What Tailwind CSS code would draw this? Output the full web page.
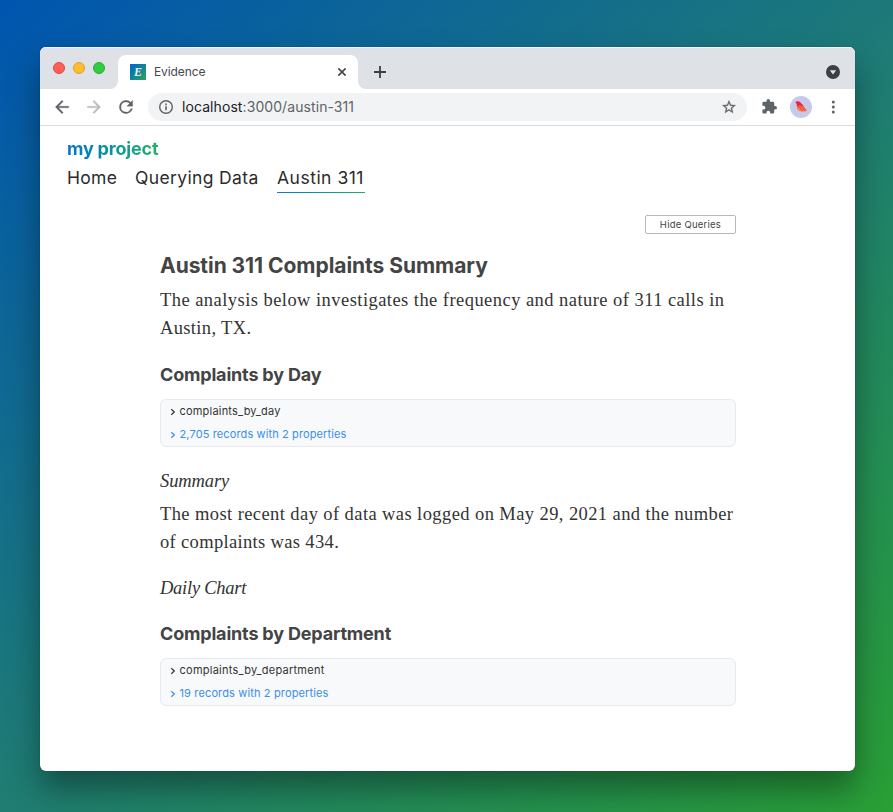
<!DOCTYPE html>
<html lang="en">
<head>
<meta charset="utf-8">
<title>Evidence</title>
<script src="https://cdn.jsdelivr.net/npm/@tailwindcss/browser@4"></script>
</head>
<body class="h-[812px] w-[893px] overflow-hidden bg-[linear-gradient(141deg,#0055b0_0%,#1e7b76_50%,#299f35_100%)] pt-[47px] pl-10 font-['Inter',sans-serif]">
<div class="flex h-[724px] w-[815px] flex-col overflow-hidden rounded-[6px] bg-white shadow-[0_0_1px_rgba(0,0,0,0.5),0_18px_32px_rgba(0,0,0,0.38)]">
  <header class="shrink-0">
    <div class="flex h-[42px] items-start border-t border-[#f3f4f5] bg-[#dee1e6]">
      <div class="flex h-full w-[78px] gap-2 pt-[14px] pl-[13px]">
        <span class="size-3 rounded-full border border-[#e2473f] bg-[#ff5f57]"></span>
        <span class="size-3 rounded-full border border-[#e0a028] bg-[#febc2e]"></span>
        <span class="size-3 rounded-full border border-[#27ad34] bg-[#33cb40]"></span>
      </div>
      <div class="relative mt-[7px] flex h-[34px] w-60 items-center rounded-t-lg bg-white pl-3">
        <svg class="absolute bottom-0 -left-2 size-2" viewBox="0 0 8 8"><path d="M8 0v8H0a8 8 0 0 0 8-8z" fill="#fff"/></svg>
        <svg class="absolute -right-2 bottom-0 size-2" viewBox="0 0 8 8"><path d="M0 0v8h8a8 8 0 0 1-8-8z" fill="#fff"/></svg>
        <span class="flex size-4 items-center justify-center bg-linear-to-br from-[#1560c8] to-[#35a052] font-['Liberation_Serif',serif] text-[12px] leading-none font-bold text-white/90 italic">E</span>
        <span class="ml-2 text-[12px] tracking-[-0.1px] text-[#45484c]">Evidence</span>
        <svg class="absolute top-[13px] left-[220px] size-2" viewBox="0 0 8 8"><path d="M.4.4l7.2 7.2M7.6.4L.4 7.6" stroke="#45484c" stroke-width="1.7"/></svg>
      </div>
      <svg class="mt-[18px] ml-4 size-3" viewBox="0 0 12 12"><path d="M6 0v12M0 6h12" stroke="#3c4043" stroke-width="1.8"/></svg>
      <svg class="mt-[17px] mr-[15px] ml-auto size-[14px]" viewBox="0 0 14 14"><circle cx="7" cy="7" r="7" fill="#3c4043"/><path d="M3.8 5.2h6.4L7 9.6z" fill="#dee1e6"/></svg>
    </div>
    <div class="flex h-[37px] items-center border-b border-[#d9dbde] pl-3">
      <svg class="size-5" viewBox="0 0 24 24" fill="#5f6368" stroke="#5f6368" stroke-width=".3"><path d="M20 11H7.83l5.59-5.59L12 4l-8 8 8 8 1.41-1.41L7.83 13H20v-2z"/></svg>
      <svg class="ml-3 size-5" viewBox="0 0 24 24" fill="#babcbe" stroke="#babcbe" stroke-width=".3"><path d="M12 4l-1.41 1.41L16.17 11H4v2h12.17l-5.58 5.59L12 20l8-8z"/></svg>
      <svg class="ml-3 size-5" viewBox="0 0 24 24" fill="#5f6368" stroke="#5f6368" stroke-width=".3"><path d="M17.65 6.35A7.95 7.95 0 0 0 12 4a8 8 0 1 0 7.73 10h-2.08A6 6 0 1 1 12 6c1.66 0 3.14.69 4.22 1.78L13 11h7V4l-2.35 2.35z"/></svg>
      <div class="ml-3 flex h-7 w-[599px] items-center rounded-full bg-[#f1f3f4] pr-[10px] pl-[10px]">
        <svg class="size-4" viewBox="0 0 16 16"><circle cx="8" cy="8" r="6.3" fill="none" stroke="#5f6368" stroke-width="1.4"/><path d="M7.2 7.2h1.6v4.1H7.2zM7.2 4.6h1.6v1.6H7.2z" fill="#5f6368"/></svg>
        <span class="ml-2 pb-px text-[14px] tracking-[0.08px] text-[#5f6368]"><span class="text-[#202124]">localhost</span>:3000/austin-311</span>
        <svg class="ml-auto size-4" viewBox="0 0 24 24" fill="#5f6368"><path d="M22 9.24l-7.19-.62L12 2 9.19 8.63 2 9.24l5.46 4.73L5.82 21 12 17.27 18.18 21l-1.63-7.03L22 9.24zM12 15.4l-3.76 2.27 1-4.28-3.32-2.88 4.38-.38L12 6.1l1.71 4.04 4.38.38-3.32 2.88 1 4.28L12 15.4z" stroke="#5f6368" stroke-width=".4"/></svg>
      </div>
      <svg class="ml-[14px] size-4" viewBox="0 1 23 23" fill="#5f6368"><path d="M20.5 11H19V7a2 2 0 0 0-2-2h-4V3.5a2.5 2.5 0 0 0-5 0V5H4a2 2 0 0 0-1.99 2v3.8H3.5a2.7 2.7 0 0 1 0 5.4H2V20a2 2 0 0 0 2 2h3.8v-1.5a2.7 2.7 0 0 1 5.4 0V22H17a2 2 0 0 0 2-2v-4h1.5a2.5 2.5 0 0 0 0-5z"/></svg>
      <svg class="ml-[13px] size-[22px]" viewBox="0 0 22 22"><circle cx="11" cy="11" r="11" fill="#c5cae9"/><path d="M5.3 6.6C6.6 4.7 9 4.8 10.5 6.5l2.6 2.7 1 4.6-3.2 1.4c-2.8-.6-4.2-2.7-4.1-6L6.5 7.4z" fill="#f02042"/><path d="M9 9l4.4 1.2 3.9 4.6-2.3-.3.6 1.3-1.6-.6-3 .2L8.2 13z" fill="#ff5a3c"/><path d="M7.2 9.5l2.6 3.9 2.2 1.7-2.8-.7C7.8 13.3 7 11.8 7.2 9.5z" fill="#ff9150"/></svg>
      <svg class="ml-[19px] h-[14px] w-1" viewBox="0 0 4 14" fill="#5f6368"><circle cx="2.3" cy="2" r="1.5"/><circle cx="2.3" cy="7" r="1.5"/><circle cx="2.3" cy="12" r="1.5"/></svg>
    </div>
  </header>
  <div class="flex flex-col pt-[11px] pl-[27px]">
    <div class="w-[92px] bg-linear-to-r from-[#0f73c8] to-[#28b063] bg-clip-text text-[18px] leading-6 font-bold tracking-[-0.2px] whitespace-nowrap text-transparent">my project</div>
    <nav class="mt-1 flex h-[28px] gap-[18px] text-[17.5px] leading-[26px] whitespace-nowrap text-[#2b2b2b]">
      <a class="w-[51px] tracking-[0.3px]">Home</a>
      <a class="ml-[-1px] w-[124px] tracking-[0.36px]">Querying Data</a>
      <a class="flex w-[88px] flex-col tracking-[0.5px]">Austin 311<span class="mt-px h-px bg-linear-to-r from-[#1577cc] to-[#2aab64]"></span></a>
    </nav>
  </div>
  <main class="ml-[120px] w-[576px] text-[#333] [&_h2]:text-[18px] [&_h2]:leading-6 [&_h2]:font-bold [&_h2]:tracking-[-0.18px] [&_h2]:text-[#444] [&_p]:relative [&_p]:-top-px [&_p]:font-['Liberation_Serif',serif] [&_p]:leading-7 [&_p]:whitespace-nowrap">
    <div class="mt-[22px] flex justify-end"><button class="h-[19px] w-[91px] rounded-[2px] border border-[#b8b8b8] text-[9.5px] leading-none tracking-[0.24px] text-[#444]">Hide Queries</button></div>
    <h1 class="mt-[17px] text-[21px] leading-[30px] font-bold tracking-[-0.05px] text-[#444]">Austin 311 Complaints Summary</h1>
    <p class="mt-[6px] text-[18.5px] tracking-[0.45px]"><span>The analysis below investigates the frequency and nature of 311 calls in</span><br><span class="tracking-[0.35px]">Austin, TX.</span></p>
    <h2 class="mt-[20px]">Complaints by Day</h2>
    <section class="mt-3 flex h-12 flex-col rounded-[6px] border border-[#e6eaee] bg-[#f7f9fb] pl-[9px] text-[11px] leading-[23px] tracking-[0.2px]">
      <div class="flex items-center gap-[3.5px]"><svg class="mt-px w-[6px]" viewBox="0 0 6 8"><path d="M1.3 1.2L4.3 4l-3 2.8" fill="none" stroke="#333" stroke-width="1.2"/></svg><span>complaints_by_day</span></div>
      <div class="flex items-center gap-[3.5px] text-[#3b8eea]"><svg class="mt-px w-[6px]" viewBox="0 0 6 8"><path d="M1.3 1.2L4.3 4l-3 2.8" fill="none" stroke="#3b8eea" stroke-width="1.2"/></svg><span class="tracking-[0.12px]">2,705 records with 2 properties</span></div>
    </section>
    <p class="mt-[21px] text-[18.5px] tracking-[-0.1px] italic">Summary</p>
    <p class="mt-[5px] text-[18.5px] tracking-[0.41px]"><span>The most recent day of data was logged on May 29, 2021 and the number</span><br><span class="tracking-[0.34px]">of complaints was 434.</span></p>
    <p class="mt-[18px] text-[18.5px] tracking-[-0.25px] italic">Daily Chart</p>
    <h2 class="mt-[19px]">Complaints by Department</h2>
    <section class="mt-3 flex h-12 flex-col rounded-[6px] border border-[#e6eaee] bg-[#f7f9fb] pl-[9px] text-[11px] leading-[23px] tracking-[0.25px]">
      <div class="flex items-center gap-[3.5px]"><svg class="mt-px w-[6px]" viewBox="0 0 6 8"><path d="M1.3 1.2L4.3 4l-3 2.8" fill="none" stroke="#333" stroke-width="1.2"/></svg><span>complaints_by_department</span></div>
      <div class="flex items-center gap-[3.5px] text-[#3b8eea]"><svg class="mt-px w-[6px]" viewBox="0 0 6 8"><path d="M1.3 1.2L4.3 4l-3 2.8" fill="none" stroke="#3b8eea" stroke-width="1.2"/></svg><span class="tracking-[0.14px]">19 records with 2 properties</span></div>
    </section>
  </main>
</div>
</body>
</html>
